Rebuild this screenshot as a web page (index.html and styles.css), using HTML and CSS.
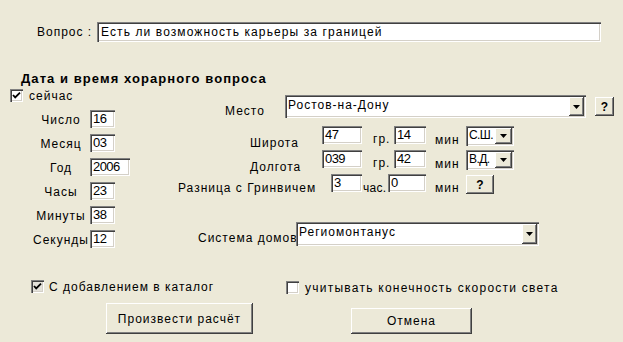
FILE: index.html
```html
<!DOCTYPE html>
<html lang="ru">
<head>
<meta charset="utf-8">
<link rel="stylesheet" href="styles.css">
</head>
<body>
<div class="dlg">
  <div class="q-row">
    <span class="q-label">Вопрос :</span>
    <div class="edit q-edit">Есть ли возможность карьеры за границей</div>
  </div>
  <div class="heading">Дата и время хорарного вопроса</div>
  <div class="mid">
    <div class="left">
      <div class="chk-row now">
        <span class="chk"><svg width="13" height="13" viewBox="0 0 13 13"><path d="M3 6 L5.2 8.4 L10 3.6" fill="none" stroke="#000" stroke-width="1.8"/></svg></span>
        <span>сейчас</span>
      </div>
      <div class="fields">
        <span class="f-label">Число</span><div class="edit num w25">16</div>
        <span class="f-label">Месяц</span><div class="edit num w25">03</div>
        <span class="f-label">Год</span><div class="edit num w40">2006</div>
        <span class="f-label">Часы</span><div class="edit num w25">23</div>
        <span class="f-label">Минуты</span><div class="edit num w25">38</div>
        <span class="f-label">Секунды</span><div class="edit num w25">12</div>
      </div>
    </div>
    <div class="right">
      <div class="row r-place">
        <span class="lbl l-place">Место</span>
        <div class="combo c-place"><span class="combo-text">Ростов-на-Дону</span><span class="dd dd-wide"><svg width="7" height="4" viewBox="0 0 7 4"><path d="M0 0H7L3.5 4Z" fill="#000"/></svg></span></div>
        <button class="btn q-btn1">?</button>
      </div>
      <div class="row r-lat">
        <span class="lbl l-lat">Широта</span>
        <div class="edit num e-deg">47</div>
        <span class="lbl l-gr">гр.</span>
        <div class="edit num e-min">14</div>
        <span class="lbl l-min">мин</span>
        <div class="combo c-small"><span class="combo-text narrow">С.Ш.</span><span class="dd dd-small"><svg width="7" height="4" viewBox="0 0 7 4"><path d="M0 0H7L3.5 4Z" fill="#000"/></svg></span></div>
      </div>
      <div class="row r-lon">
        <span class="lbl l-lat">Долгота</span>
        <div class="edit num e-deg">039</div>
        <span class="lbl l-gr">гр.</span>
        <div class="edit num e-min">42</div>
        <span class="lbl l-min">мин</span>
        <div class="combo c-small"><span class="combo-text narrow">В.Д.</span><span class="dd dd-small"><svg width="7" height="4" viewBox="0 0 7 4"><path d="M0 0H7L3.5 4Z" fill="#000"/></svg></span></div>
      </div>
      <div class="row r-gmt">
        <span class="lbl l-gmt">Разница с Гринвичем</span>
        <div class="edit num e-h">3</div>
        <span class="lbl l-hr">час.</span>
        <div class="edit num e-m2">0</div>
        <span class="lbl l-min">мин</span>
        <button class="btn q-btn2">?</button>
      </div>
      <div class="row r-houses">
        <span class="lbl l-houses">Система домов</span>
        <div class="combo c-houses"><span class="combo-text">Региомонтанус</span><span class="dd dd-wide"><svg width="7" height="4" viewBox="0 0 7 4"><path d="M0 0H7L3.5 4Z" fill="#000"/></svg></span></div>
      </div>
    </div>
  </div>
  <div class="opts">
    <div class="chk-row opt1">
      <span class="chk chk-gray"><svg width="13" height="13" viewBox="0 0 13 13"><path d="M3 6 L5.2 8.4 L10 3.6" fill="none" stroke="#000" stroke-width="1.8"/></svg></span>
      <span>С добавлением в каталог</span>
    </div>
    <div class="chk-row opt2">
      <span class="chk"></span>
      <span class="opt2-text">учитывать конечность скорости света</span>
    </div>
  </div>
  <div class="btns">
    <button class="btn b-calc">Произвести расчёт</button>
    <button class="btn b-cancel">Отмена</button>
  </div>
</div>
</body>
</html>
```
FILE: styles.css
```css
body {
  margin: 0;
  background: #ECE9D8;
  font-family: "Liberation Sans", Arial, sans-serif;
  font-size: 12px;
  letter-spacing: 1px;
  color: #000;
}
.dlg {
  width: 623px;
  height: 342px;
  overflow: hidden;
}
.edit {
  background: #fff;
  box-sizing: border-box;
  box-shadow: inset 1px 1px #808080, inset 2px 2px #404040, inset -1px -1px #fff, inset -2px -2px #d4d0c8;
  white-space: nowrap;
  overflow: hidden;
}
.q-row {
  display: flex;
  margin-top: 22px;
  height: 20px;
}
.q-label {
  margin-left: 37px;
  width: 60px;
  line-height: 20px;
  white-space: nowrap;
}
.q-edit {
  width: 504px;
  height: 20px;
  padding: 0 4px;
  line-height: 20px;
  letter-spacing: 1.1px;
}
.heading {
  margin: 29px 0 0 21px;
  font-weight: bold;
  font-size: 13px;
  line-height: 15px;
  letter-spacing: 1.07px;
}
.mid {
  display: flex;
}
.left {
  width: 168px;
  padding: 3px 0 0 10px;
}
.chk-row {
  display: flex;
  align-items: center;
  height: 13px;
  line-height: 14px;
  white-space: nowrap;
}
.now { gap: 6px; }
.chk {
  width: 13px;
  height: 13px;
  flex: none;
  box-sizing: border-box;
  background: #fff;
  box-shadow: inset 1px 1px #808080, inset 2px 2px #404040, inset -1px -1px #fff, inset -2px -2px #d4d0c8;
  display: flex;
}
.chk-gray { background: #e4e2da; }
.fields {
  display: grid;
  grid-template-columns: 58px auto;
  grid-auto-rows: 18px;
  row-gap: 6px;
  margin: 8px 0 0 22px;
  justify-items: start;
}
.f-label {
  justify-self: stretch;
  text-align: center;
  line-height: 20px;
  white-space: nowrap;
}
.num {
  font-size: 13px;
  letter-spacing: -0.6px;
  padding-left: 3px;
  line-height: 17px;
  height: 18px;
}
.w25 { width: 25px; }
.w40 { width: 40px; }
.right {
  display: flex;
  flex-direction: column;
  padding-top: 9px;
}
.row {
  display: flex;
  align-items: flex-start;
}
.lbl {
  line-height: 14px;
  white-space: nowrap;
  box-sizing: border-box;
  flex: none;
}
.r-place { height: 23px; }
.l-place { width: 107px; padding-left: 47px; margin-top: 9px; }
.combo {
  display: flex;
  box-sizing: border-box;
  background: #fff;
  padding: 2px;
  box-shadow: inset 1px 1px #808080, inset 2px 2px #404040, inset -1px -1px #fff, inset -2px -2px #d4d0c8;
  flex: none;
}
.combo-text {
  flex: 1;
  padding-left: 1px;
  line-height: 17px;
  white-space: nowrap;
  overflow: hidden;
}
.combo-text.narrow {
  font-size: 12px;
  letter-spacing: -0.6px;
  line-height: 14px;
}
.dd {
  background: #ECE9D8;
  box-shadow: inset -1px -1px #404040, inset 1px 1px #fff, inset -2px -2px #808080;
  display: flex;
  align-items: center;
  justify-content: center;
  flex: none;
}
.dd-wide { width: 15px; }
.dd-small { width: 17px; }
.c-place { width: 301px; height: 23px; }
.btn {
  background: #ECE9D8;
  border: 0;
  padding: 0;
  margin: 0;
  font: inherit;
  letter-spacing: inherit;
  color: #000;
  box-shadow: inset -1px -1px #404040, inset 1px 1px #fff, inset -2px -2px #808080;
  flex: none;
}
.q-btn1, .q-btn2 { font-weight: bold; letter-spacing: 0; }
.q-btn1 { margin: 2px 0 0 9px; width: 19px; height: 19px; }
.r-lat { height: 20px; margin-top: 8px; }
.r-lon { height: 20px; margin-top: 4px; }
.l-lat { width: 144px; padding-left: 72px; margin-top: 10px; }
.e-deg { width: 40px; }
.l-gr { width: 32px; padding-left: 11px; margin-top: 6px; }
.e-min { width: 32px; }
.l-min { width: 40px; padding-left: 9px; margin-top: 7px; }
.c-small { width: 48px; height: 20px; }
.r-gmt { height: 19px; margin-top: 4px; }
.l-gmt { width: 153px; margin-top: 7px; }
.e-h { width: 31px; }
.l-hr { width: 26px; padding-left: 1px; margin-top: 7px; letter-spacing: 0.3px; }
.e-m2 { width: 38px; }
.q-btn2 { width: 28px; height: 19px; margin-top: 1px; }
.r-houses { height: 24px; margin-top: 29px; }
.l-houses { width: 118px; padding-left: 20px; margin-top: 9px; }
.c-houses { width: 243px; height: 24px; }
.opts {
  display: flex;
  margin-top: 32px;
  align-items: flex-start;
}
.opt1 { margin-left: 31px; width: 255px; gap: 5px; }
.opt2 { gap: 6px; margin-top: 1px; }
.opt2-text { letter-spacing: 1.25px; }
.btns {
  display: flex;
  align-items: flex-start;
  margin-top: 9px;
}
.b-calc { margin-left: 106px; width: 147px; height: 31px; }
.b-cancel { margin-left: 98px; margin-top: 5px; width: 121px; height: 26px; }
```
